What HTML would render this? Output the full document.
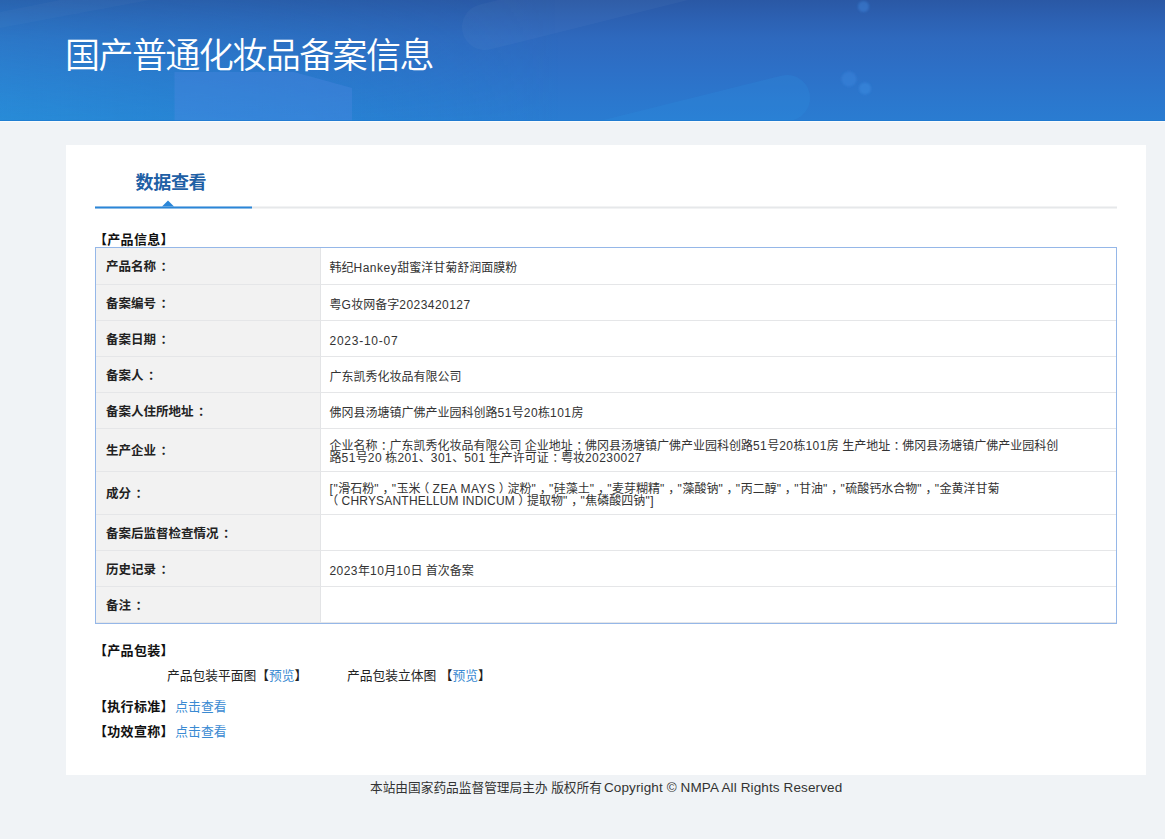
<!DOCTYPE html>
<html lang="zh-CN">
<head>
<meta charset="utf-8">
<title>国产普通化妆品备案信息</title>
<style>
*{box-sizing:border-box;margin:0;padding:0}
html,body{width:1165px;height:839px;overflow:hidden}
body{background:#f0f3f6;font-family:"Liberation Sans","Noto Sans CJK SC",sans-serif;color:#333;font-size:12px;position:relative}
.hdr{position:absolute;left:0;top:0;width:1165px;height:121px;overflow:hidden;background:linear-gradient(180deg,#2a58a5 0%,#2c60b1 14%,#2e69be 32%,#2d70c7 58%,#2b78ce 85%,#2a7cd1 100%)}
.hdr svg{position:absolute;left:0;top:0}
.hdr h1{position:absolute;left:65px;top:33px;font-size:35px;line-height:46px;font-weight:350;color:#fff;white-space:nowrap;letter-spacing:-1.55px}
.card{position:absolute;left:66px;top:145px;width:1080px;height:630px;background:#fff}
.tabbar{position:absolute;left:29px;top:61px;width:1022px;height:2px;background:#e6e8ea;transform:translateY(.5px)}
.tabbar i{position:absolute;left:0;top:0;width:157px;height:2px;background:#2a86d8}
.tabbar b{position:absolute;left:67px;top:-6px;width:0;height:0;border-left:6px solid transparent;border-right:6px solid transparent;border-bottom:6px solid #2a86d8}
.tab{position:absolute;left:69.5px;top:23px;font-size:18px;line-height:30px;font-weight:700;color:#1f60a5;letter-spacing:-0.3px;white-space:nowrap}
.sec{position:absolute;left:28px;letter-spacing:.3px;font-weight:700;color:#111;font-size:13px;line-height:16px;white-space:nowrap}
.sec a{font-weight:400;margin-left:1.5px;letter-spacing:0;font-size:12.8px}
table{position:absolute;left:29px;top:102px;width:1022px;border-collapse:separate;border-spacing:0;border:1px solid #95b7e8;table-layout:fixed}
td{border-bottom:1px solid #e5e6e8;font-size:12px;line-height:12px;vertical-align:middle;color:#333}
td.l{width:225px;background:#f2f2f2;font-weight:700;font-size:12.5px;color:#222;border-right:1px solid #e3e4e6;padding:2px 0 0 10px}
td.v{padding:4px 56px 0 8.5px}
tr.two td.v{padding-top:3px}
.c{position:relative;left:3.3px}
.p{position:relative;left:-3.3px}
.q{position:relative;left:3.3px}
.n{letter-spacing:.45px}
.d{letter-spacing:.75px}
.k{letter-spacing:.58px}
td.l .c{left:4.5px}
.h{letter-spacing:.5px}
.z{letter-spacing:.47px}
.y{letter-spacing:.2px}
a{color:#3a8ad2;text-decoration:none}
.ft{position:absolute;left:370px;top:779px;white-space:nowrap;font-size:12.7px;line-height:18px;color:#333}
.ft span{font-size:13.5px;letter-spacing:0.12px;margin-left:-1.5px}
.abs{position:absolute;white-space:nowrap;font-size:12.75px;line-height:16px;color:#222}
</style>
</head>
<body>
<div class="hdr">
<svg width="1165" height="121" viewBox="0 0 1165 121">
<defs>
<linearGradient id="lg" x1="0" y1="0" x2="1" y2="0"><stop offset="0" stop-color="#2796dc" stop-opacity=".6"/><stop offset=".45" stop-color="#2390d8" stop-opacity=".38"/><stop offset="1" stop-color="#1f90d6" stop-opacity="0"/></linearGradient>
<linearGradient id="vg" x1="0" y1="0" x2="0" y2="1"><stop offset="0" stop-color="#fff" stop-opacity=".3"/><stop offset="1" stop-color="#fff" stop-opacity="1"/></linearGradient>
<filter id="bl"><feGaussianBlur stdDeviation="0.9"/></filter>
<mask id="mk"><rect width="1165" height="121" fill="url(#vg)"/></mask>
</defs>
<rect x="0" y="0" width="560" height="121" fill="url(#lg)" mask="url(#mk)"/>
<polygon points="0,28 150,0 60,0 0,12" fill="#fff" opacity=".025"/>
<polygon points="174.5,121 174.5,72 294,72 352,88 352,121" fill="#5c8be8" opacity=".27"/>
<rect x="462" y="4" width="330" height="46" rx="23" fill="#fff" opacity=".032" transform="rotate(-14 485 27)"/>
<rect x="560" y="75" width="250" height="46" rx="23" fill="#2d95e6" opacity=".2" transform="rotate(-14 787 98)"/>
<g filter="url(#bl)"><circle cx="863.5" cy="6.5" r="5.5" fill="#3d8ae0" opacity=".45"/>
<circle cx="849" cy="79" r="7.5" fill="#3d8ae0" opacity=".4"/>
<circle cx="865" cy="88.5" r="6" fill="#3d8ae0" opacity=".55"/></g>
</svg>
<h1>国产普通化妆品备案信息</h1>
<div style="position:absolute;left:0;top:120px;width:1165px;height:1px;background:#1a78d0;opacity:.65"></div>
</div>
<div style="position:absolute;left:0;top:121px;width:1165px;height:1px;background:#f9fbfc"></div>
<div class="card">
  <div class="tab">数据查看</div>
  <div class="tabbar"><i></i><b></b></div>
  <div class="sec" style="top:87px">【产品信息】</div>
  <table>
    <tr style="height:37px"><td class="l">产品名称<span class="c">：</span></td><td class="v">韩纪<span class="h">Hankey</span>甜蜜洋甘菊舒润面膜粉</td></tr>
    <tr style="height:36px"><td class="l">备案编号<span class="c">：</span></td><td class="v">粤<span class="n">G</span>妆网备字<span class="n">2023420127</span></td></tr>
    <tr style="height:36px"><td class="l">备案日期<span class="c">：</span></td><td class="v"><span class="d">2023-10-07</span></td></tr>
    <tr style="height:36px"><td class="l">备案人<span class="c">：</span></td><td class="v">广东凯秀化妆品有限公司</td></tr>
    <tr style="height:36px"><td class="l">备案人住所地址<span class="c">：</span></td><td class="v">佛冈县汤塘镇广佛产业园科创路<span class="n">51</span>号<span class="n">20</span>栋<span class="n">101</span>房</td></tr>
    <tr class="two" style="height:43px"><td class="l">生产企业<span class="c">：</span></td><td class="v">企业名称<span class="c">：</span>广东凯秀化妆品有限公司 企业地址<span class="c">：</span>佛冈县汤塘镇广佛产业园科创路<span class="n">51</span>号<span class="n">20</span>栋<span class="n">101</span>房 生产地址<span class="c">：</span>佛冈县汤塘镇广佛产业园科创<br>路<span class="n">51</span>号<span class="n">20</span> 栋<span class="n">201</span>、<span class="n">301</span>、<span class="n">501</span> 生产许可证<span class="c">：</span>粤妆<span class="n">20230027</span></td></tr>
    <tr class="two" style="height:43px"><td class="l">成分<span class="c">：</span></td><td class="v"><span class="k">["</span>滑石粉<span class="k">"<span class="c">，</span>"</span>玉米<span class="p">（</span><span class="z">ZEA MAYS</span><span class="q">）</span>淀粉<span class="k">"<span class="c">，</span>"</span>硅藻土<span class="k">"<span class="c">，</span>"</span>麦芽糊精<span class="k">"<span class="c">，</span>"</span>藻酸钠<span class="k">"<span class="c">，</span>"</span>丙二醇<span class="k">"<span class="c">，</span>"</span>甘油<span class="k">"<span class="c">，</span>"</span>硫酸钙水合物<span class="k">"<span class="c">，</span>"</span>金黄洋甘菊<br><span class="p">（</span><span class="y">CHRYSANTHELLUM INDICUM</span><span class="q">）</span>提取物<span class="k">"<span class="c">，</span>"</span>焦磷酸四钠<span class="k">"]</span></td></tr>
    <tr style="height:36px"><td class="l">备案后监督检查情况<span class="c">：</span></td><td class="v"></td></tr>
    <tr style="height:36px"><td class="l">历史记录<span class="c">：</span></td><td class="v"><span class="n">2023</span>年<span class="n">10</span>月<span class="n">10</span>日 首次备案</td></tr>
    <tr style="height:36px"><td class="l">备注<span class="c">：</span></td><td class="v"></td></tr>
  </table>
  <div class="sec" style="top:498px">【产品包装】</div>
  <div class="abs" style="left:101px;top:523px">产品包装平面图【<a>预览</a>】</div>
  <div class="abs" style="left:281px;top:523px">产品包装立体图 【<a>预览</a>】</div>
  <div class="sec" style="top:554px">【执行标准】<a>点击查看</a></div>
  <div class="sec" style="top:579px">【功效宣称】<a>点击查看</a></div>
</div>
<div class="ft">本站由国家药品监督管理局主办 版权所有 <span>Copyright © NMPA All Rights Reserved</span></div>
</body>
</html>
